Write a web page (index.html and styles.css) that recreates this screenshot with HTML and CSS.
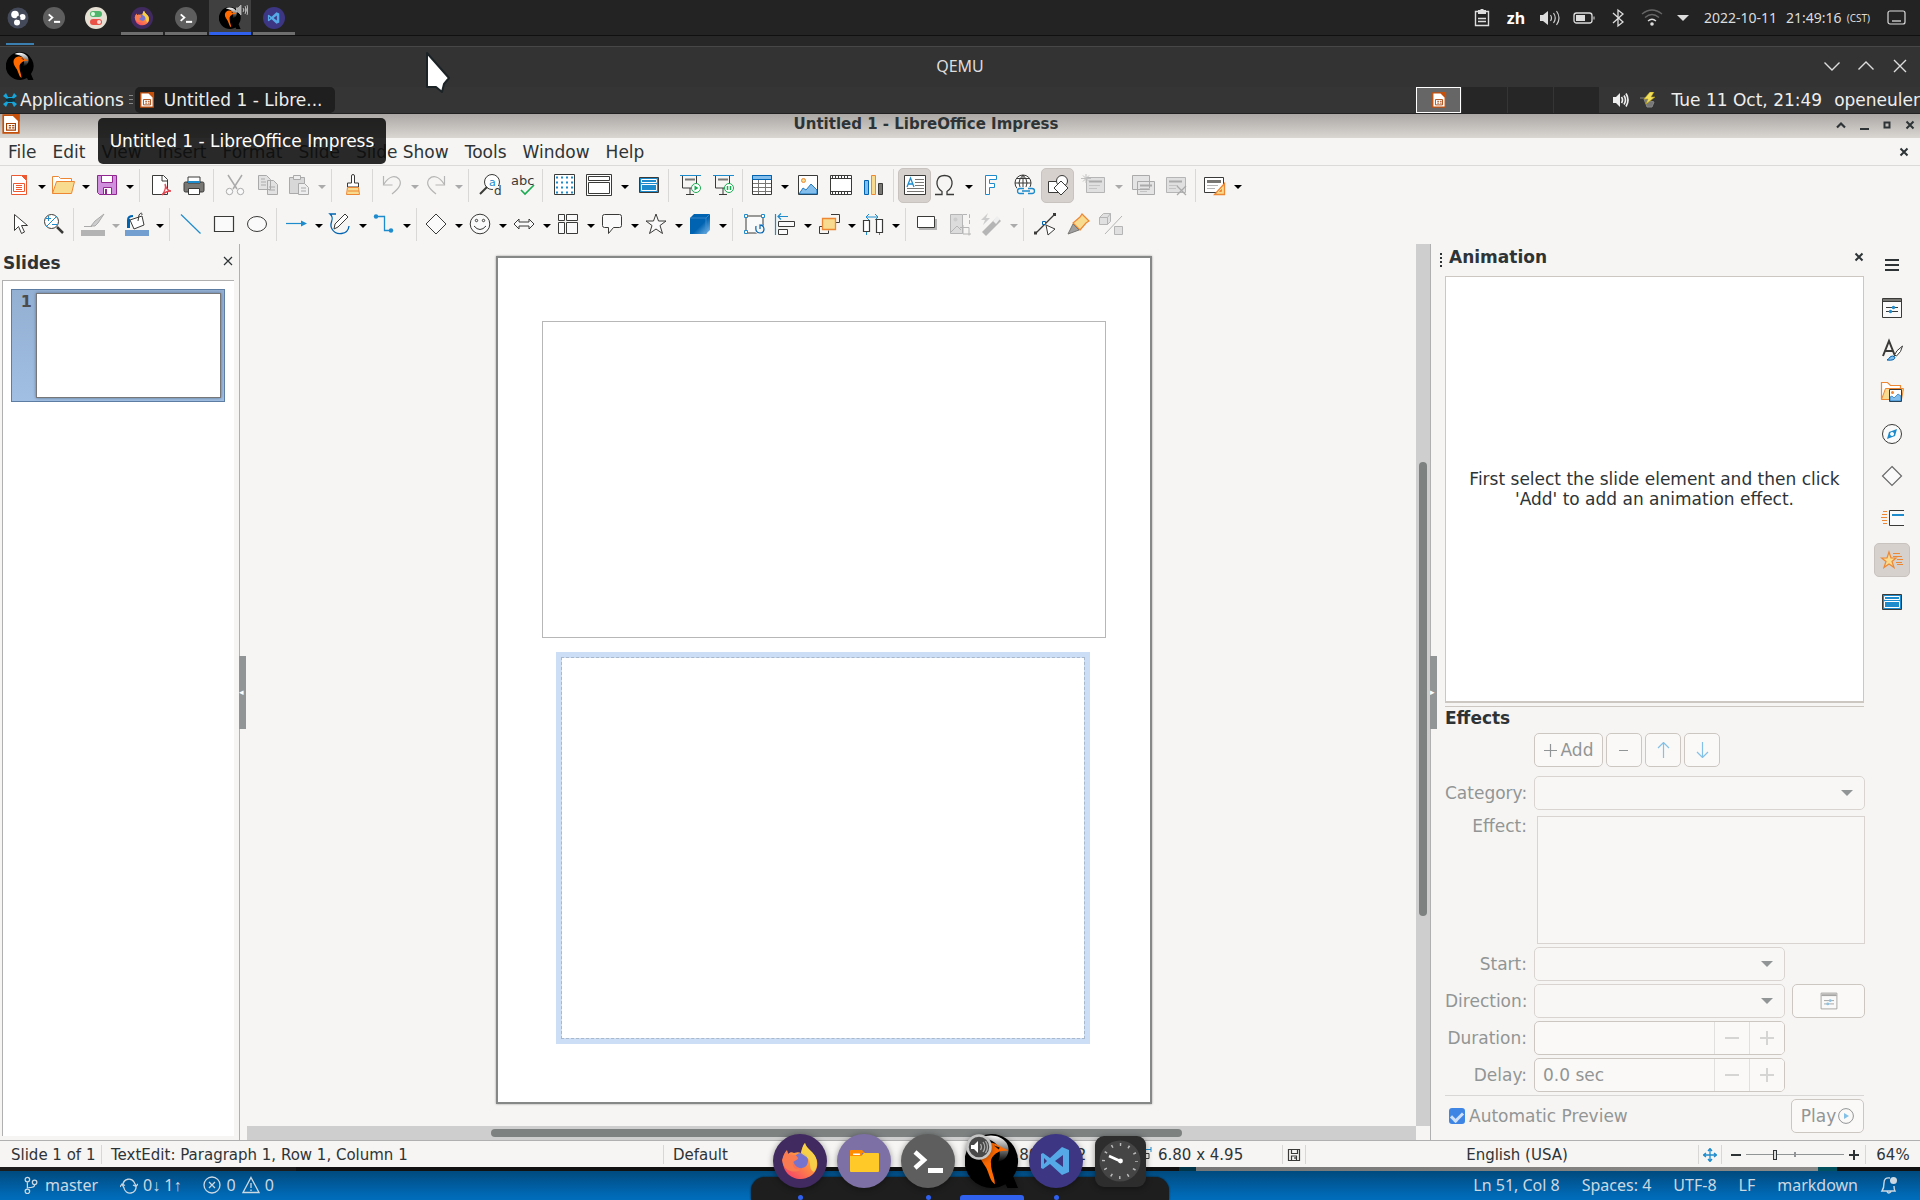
FILE: index.html
```html
<!DOCTYPE html>
<html lang="en">
<head>
<meta charset="utf-8">
<title>QEMU</title>
<link rel="stylesheet" href="styles.css">
</head>
<body>
<svg class="defs" aria-hidden="true">
  <defs>
    <linearGradient id="g-qemu" x1="0" y1="0" x2="0" y2="1"><stop offset="0" stop-color="#fff"/><stop offset="1" stop-color="#000"/></linearGradient>
    <linearGradient id="g-fox" x1="1" y1="0" x2="0.2" y2="1"><stop offset="0" stop-color="#ffe44a"/><stop offset=".45" stop-color="#ff9a3c"/><stop offset="1" stop-color="#f5436a"/></linearGradient>
    <linearGradient id="g-cube" x1="0" y1="0" x2="1" y2="1"><stop offset=".55" stop-color="#0063b1"/><stop offset="1" stop-color="#83beec"/></linearGradient>
  </defs>
  <symbol id="firefox" viewBox="0 0 54 54">
    <circle cx="27" cy="27" r="27" fill="#402a60"/>
    <path d="M10 25c0-4 2-7 4-9l1 4c2-2 4-2 6-1 3-1 5-1 7 0 1-4 2-8 4-10 1 5 7 8 10 13 6 10 0 22-14 23C17 45 9 37 10 25z" fill="url(#g-fox)"/>
    <path d="M20 26c1-5 7-9 12-6 4 3 4 10 0 13-5 3-11 0-12-7z" fill="#7673cf"/>
    <path d="M9 26c1-4 3-7 5-9l1 4c2-1 4 0 6 0 2 0 4 2 4 4l-5 3c-1 5 3 9 9 7-6 5-19 3-20-9z" fill="#f97b52"/>
    <path d="M28 19c1-5 2-8 4-10 1 5 7 8 10 13 3 6 2 12-1 16-5-2-3-7-5-12-2-4-5-4-8-7z" fill="#f7d64a" opacity=".85"/>
  </symbol>
  <symbol id="terminal" viewBox="0 0 54 54">
    <circle cx="27" cy="27" r="27" fill="#5e5e5e"/>
    <path d="M14 18l9 8-9 8" fill="none" stroke="#fff" stroke-width="4.5"/><path d="M27 34h15v5H27z" fill="#fff"/>
  </symbol>
  <symbol id="qemu" viewBox="0 0 56 56">
    <path d="M28 0a28 28 0 1 0 14 52l2 4h11l-5-12A28 28 0 0 0 28 0z" fill="#000"/>
    <path d="M17 4c9-5 21-2 26 5 5 8 1 18-9 20 4-7 2-16-3-20-4-3-9-4-14-5z" fill="url(#g-qemu)"/>
    <path d="M15 20c0-9 10-14 18-9 5 3 7 4 12 6l-9 1c-6 3-10 7-9 13 0 8 4 13 4 21-5-3-6-11-9-17-3-5-7-9-7-15z" fill="#ff6a00"/>
    <path d="M30 12l6 2-1 2z" fill="#111"/>
  </symbol>
  <symbol id="vscode" viewBox="0 0 54 54">
    <circle cx="27" cy="27" r="27" fill="#3c3683"/>
    <path fill-rule="evenodd" d="M33 13l7 3v22l-7 3-12-11-7 5-2-1V20l2-1 7 5zM34 21l-8 6 8 6zM15 24v6l3-3z" fill="#55a9e6"/>
  </symbol>
  <symbol id="impress" viewBox="0 0 16 18">
    <path d="M1 1h9l5 5v11H1z" fill="#fff" stroke="#c4500c" stroke-width="1.5"/><path d="M9 0h7v7z" fill="#c4500c"/>
    <path d="M4 8.500h8v6H4z" fill="none" stroke="#a33e03"/><path d="M6 10.500h2M9 10.500h2M6 12.500h2M9 12.500h2" stroke="#a33e03"/>
  </symbol>
  <symbol id="properties" viewBox="0 0 24 24">
    <path d="M2.500 2.500h19v19h-19z" fill="#fafafa" stroke="#3a3a38"/><path d="M3 3h18v2.500H3z" fill="#797774"/><path d="M3 5.500h18M6 11.500h12M6 15.500h12" stroke="#3a3a38"/><circle cx="13.500" cy="11.500" r="1.700" fill="#1e8bcd"/><circle cx="10.500" cy="15.500" r="1.700" fill="#1e8bcd"/>
  </symbol>
  <symbol id="master" viewBox="0 0 24 24">
    <path d="M2.500 4.500h19v15h-19z" fill="#1e8bcd" stroke="#3a3a38"/><path d="M4.500 6.500h15v3h-15zM4.500 11.500h15v6h-15z" fill="#1e8bcd" stroke="#fff"/>
  </symbol>
  <symbol id="cross" viewBox="0 0 10 10"><path d="M1.500 1.500l7 7M8.500 1.500l-7 7" stroke="#2e3436" stroke-width="2" fill="none"/></symbol>
</svg>

<header class="panel">
  <nav class="launchers" aria-label="Launchers">
    <button aria-label="Menu"><svg class="i22" viewBox="0 0 22 22"><circle cx="11" cy="11" r="10.500" fill="#454a5a"/><circle cx="8" cy="7.500" r="3.800" fill="#fff"/><circle cx="15.500" cy="10" r="3" fill="#fff"/><circle cx="10" cy="15.500" r="3" fill="#fff"/><circle cx="11.500" cy="11" r="2" fill="#454a5a"/></svg></button>
    <button aria-label="Terminal"><svg class="i22"><use href="#terminal"/></svg></button>
    <button class="wide" aria-label="Settings"><svg class="i22" viewBox="0 0 22 22"><circle cx="11" cy="11" r="11" fill="#e6e0d4"/><rect x="5" y="4" width="12" height="6" rx="3" fill="#4fb56c"/><rect x="5" y="12" width="12" height="6" rx="3" fill="#ea5248"/><circle cx="8" cy="7" r="2" fill="#dfffe4"/><circle cx="14" cy="15" r="2" fill="#ffdcd8"/></svg></button>
  </nav>
  <nav class="tasks" aria-label="Windows">
    <button aria-label="Firefox"><svg class="i22"><use href="#firefox"/></svg></button>
    <button aria-label="Terminal window"><svg class="i22"><use href="#terminal"/></svg></button>
    <button class="current" aria-label="QEMU"><svg class="i22"><use href="#qemu"/></svg><svg class="sound" viewBox="0 0 12 10"><path d="M0 3h2l3-3v10L2 7H0zM7 3q2 2 0 4M9 1q3 4 0 8M11 0q2.500 5 0 10" fill="#ddd" stroke="#bbb" fill-opacity=".7" stroke-width=".8"/></svg></button>
    <button aria-label="Code"><svg class="i22"><use href="#vscode"/></svg></button>
  </nav>
  <div class="tray">
    <span class="cell"><svg class="i22" viewBox="0 0 22 22"><path d="M4.500 4.500h13v14h-13zM7 11.500h8M7 14.500h8" fill="none" stroke="#ddd" stroke-width="1.400"/><path d="M7 3h2l1-1h2l1 1h2v4H7z" fill="#ddd"/></svg></span>
    <span class="cell lang">zh</span>
    <span class="cell"><svg class="i22" viewBox="0 0 22 22"><path d="M1 8h3l5-4v14l-5-4H1z" fill="#ddd"/><path d="M11.500 8q2 3 0 6M14.500 6q3.500 5 0 10M17.500 4q5 7 0 14" fill="none" stroke="#ccc" stroke-width="1.200"/></svg></span>
    <span class="cell"><svg class="i22" viewBox="0 0 22 22"><rect x="1" y="6" width="18" height="10" rx="2.500" fill="none" stroke="#ddd" stroke-width="1.300"/><path d="M3 8h9v6H3zM20.500 9.500h1v3h-1z" fill="#ddd"/></svg></span>
    <span class="cell"><svg class="i22" viewBox="0 0 22 22"><path d="M6 6l10 9-5 4V3l5 4-10 9" fill="none" stroke="#ddd" stroke-width="1.300"/></svg></span>
    <span class="cell"><svg class="i22" viewBox="0 0 22 22"><path d="M1 7q10-8 20 0M4 10.500q7-6 14 0" fill="none" stroke="#666" stroke-width="1.300"/><path d="M7 14q4-3.500 8 0" fill="none" stroke="#ddd" stroke-width="1.300"/><circle cx="11" cy="17" r="1.800" fill="#ddd"/></svg></span>
    <span class="cell narrow"><svg class="i12" viewBox="0 0 12 12"><path d="M0 3h12L6 9z" fill="#ddd"/></svg></span>
    <span class="date">2022-10-11</span><span class="time">21:49:16</span><span class="zone">(CST)</span>
    <span class="cell desk"><svg class="i22" viewBox="0 0 22 22"><rect x="2" y="4" width="17" height="13" rx="2" fill="none" stroke="#ddd" stroke-width="1.200"/><path d="M6 14h9" stroke="#ddd" stroke-width="1.300"/></svg></span>
  </div>
</header>

<div class="backdrop"><span></span></div>

<section class="vm-title">
  <svg class="i28"><use href="#qemu"/></svg>
  <h1>QEMU</h1>
  <div class="vm-buttons">
    <button aria-label="Minimize"><svg class="i16" viewBox="0 0 16 16"><path d="M0.500 4.500L8 12l7.500-7.500" fill="none" stroke="#ddd" stroke-width="1.400"/></svg></button>
    <button aria-label="Maximize"><svg class="i16" viewBox="0 0 16 16"><path d="M0.500 11.500L8 4l7.500 7.500" fill="none" stroke="#ddd" stroke-width="1.400"/></svg></button>
    <button aria-label="Close"><svg class="i16" viewBox="0 0 16 16"><path d="M2 2l12 12M14 2L2 14" fill="none" stroke="#ddd" stroke-width="1.400"/></svg></button>
  </div>
</section>

<div class="xfce">
  <button class="apps"><svg class="i16" viewBox="0 0 16 16"><path d="M1 4l3-3 2 4 4 0 2-4 3 3-4 3v2l4 3-3 3-2-4H6l-2 4-3-3 4-3V7z" fill="#17a6dc"/><path d="M4 7l3-1 3 0 3 1v2l-3 1H6L4 9z" fill="#073340"/></svg>Applications</button>
  <span class="grip"></span>
  <button class="task"><svg class="i16"><use href="#impress"/></svg>Untitled 1 - Libre...</button>
  <div class="pager"><span class="active"><svg class="i16"><use href="#impress"/></svg></span><span></span><span></span><span></span></div>
  <svg class="i16 snd" viewBox="0 0 16 16"><path d="M0 5h3l4-4v14l-4-4H0z" fill="#eee"/><path d="M8.500 5q2 3 0 6M11 3.500q3 4.500 0 9M13 1.500q4 6.500 0 13" fill="none" stroke="#eee" stroke-width="1.700"/></svg>
  <svg class="i16 pwr" viewBox="0 0 16 16"><path d="M0 6h8M4 7l3 8h5l2-5z" stroke="#888" fill="#777"/><path d="M10 0L4 7h4l-2 5 9-7h-4l3-5z" fill="#f2e05c" stroke="#b7a013" stroke-width=".6"/></svg>
  <span class="clock">Tue 11 Oct, 21:49</span>
  <span class="user">openeuler</span>
</div>

<div class="win-title">
  <svg class="doc"><use href="#impress"/></svg>
  <h2>Untitled 1 - LibreOffice Impress</h2>
  <div class="win-buttons">
    <button aria-label="Shade"><svg class="i10" viewBox="0 0 10 10"><path d="M1 7.500l4-4 4 4" fill="none" stroke="#2e3436" stroke-width="2.200"/></svg></button>
    <button aria-label="Minimize window"><svg class="i10" viewBox="0 0 10 10"><path d="M1 9h9" stroke="#2e3436" stroke-width="2"/></svg></button>
    <button aria-label="Maximize window"><svg class="i10" viewBox="0 0 10 10"><path d="M2.500 2.500h5v5h-5z" fill="none" stroke="#2e3436" stroke-width="2"/></svg></button>
    <button aria-label="Close window"><svg class="i10"><use href="#cross"/></svg></button>
  </div>
</div>

<nav class="menubar">
  <button>File</button><button>Edit</button><button>View</button><button>Insert</button><button>Format</button><button>Slide</button><button>Slide Show</button><button>Tools</button><button>Window</button><button>Help</button>
  <button class="doc-close" aria-label="Close document"><svg class="i10"><use href="#cross"/></svg></button>
</nav>

<div class="toolbar">
  <div class="combo"><button aria-label="New"><svg viewBox="0 0 24 24"><path d="M4.500 2.500h10l5 5v14h-15z" fill="#fff" stroke="#ed5a32"/><path d="M14 2h6v6z" fill="#ed5a32"/><path d="M6.500 10.500h11v8h-11z" fill="none" stroke="#ed5a32"/><path d="M9 12.500h6M9 14.500h6M9 16.500h6" stroke="#ed5a32"/></svg></button><button class="drop" aria-label="New options"></button></div>
  <div class="combo"><button aria-label="Open"><svg viewBox="0 0 24 24"><path d="M1.500 20.500v-17h6l2 2h11v3" fill="#fff" stroke="#ed8733"/><path d="M1.500 20.500l4-12h18l-3 12z" fill="#f8db8f" stroke="#ed8733"/></svg></button><button class="drop" aria-label="Open options"></button></div>
  <div class="combo"><button aria-label="Save"><svg viewBox="0 0 24 24"><path d="M2.500 2.500h19v19h-17l-2-2z" fill="#d190dd" stroke="#92278f"/><path d="M6.500 2.500h11v7h-11z" fill="#fff" stroke="#92278f"/><path d="M8.500 14.500h8v7h-8z" fill="#fff" stroke="#92278f"/><path d="M10 16h2v5h-2z" fill="#92278f"/></svg></button><button class="drop" aria-label="Save options"></button></div>
  <i class="sep"></i>
  <button aria-label="Export PDF"><svg viewBox="0 0 24 24"><path d="M3.500 2.500h11l4 4v15h-15z" fill="#fff" stroke="#3a3a38"/><path d="M13 2v6h6" fill="none" stroke="#3a3a38"/><path d="M13 22c4-5 4-8 3-11 1 4 3 7 6 7-3 0-6 1-9 4z" fill="#fff" stroke="#e14852" stroke-width="1.300"/></svg></button>
  <button aria-label="Print"><svg viewBox="0 0 24 24"><rect x="2" y="9" width="20" height="10" rx="1.500" fill="#797774" stroke="#3a3a38"/><path d="M6 4h12v6H6z" fill="#fff" stroke="#3a3a38"/><path d="M6 8h12v2H6z" fill="#1e8bcd"/><path d="M6.500 15.500h11v6h-11z" fill="#fff" stroke="#3a3a38"/></svg></button>
  <i class="sep"></i>
  <button disabled aria-label="Cut"><svg viewBox="0 0 24 24"><path d="M5 2l9 14M19 2l-9 14" fill="none" stroke="#aaa" stroke-width="1.500"/><circle cx="6.500" cy="18.500" r="3.200" fill="#fafafa" stroke="#aaa"/><circle cx="17.500" cy="18.500" r="3.200" fill="#fafafa" stroke="#aaa"/></svg></button>
  <button disabled aria-label="Copy"><svg viewBox="0 0 24 24"><path d="M2.500 2.500h8l4 4v10h-12zM11.500 7.500h6l4 4v10h-10z" fill="#e2e2e2" stroke="#aaa"/><path d="M5 6h4M5 9h5M5 12h5M13 14h6M13 17h6" stroke="#aaa"/></svg></button>
  <div class="combo"><button disabled aria-label="Paste"><svg viewBox="0 0 24 24"><path d="M2.500 4.500h15v16h-15z" fill="#d8d8d8" stroke="#aaa"/><path d="M6.500 2.500h7v4h-7zM11.500 10.500h6l4 4v7h-10z" fill="#eee" stroke="#aaa"/><path d="M14 15h5M14 18h5" stroke="#aaa"/></svg></button><button disabled class="drop" aria-label="Paste options"></button></div>
  <i class="sep"></i>
  <button aria-label="Clone formatting"><svg viewBox="0 0 24 24"><path d="M10.500 10V3a1.500 1.500 0 0 1 3 0v7h4v4h-11v-4z" fill="#fff" stroke="#3a3a38"/><path d="M6.500 14.500h11l1 7h-13z" fill="#f8db8f" stroke="#ed8733"/><path d="M7 18h11" stroke="#ed8733"/></svg></button>
  <i class="sep"></i>
  <div class="combo"><button disabled aria-label="Undo"><svg viewBox="0 0 24 24"><path d="M3.500 3v9h9M4 11c5-8 11-9 15-5 3 4 1 9-7 15" fill="none" stroke="#b5b5b5" stroke-width="1.200"/></svg></button><button disabled class="drop" aria-label="Undo list"></button></div>
  <div class="combo"><button disabled aria-label="Redo"><svg viewBox="0 0 24 24"><path d="M20.500 3v9h-9M20 11C15 3 9 2 5 6c-3 4-1 9 7 15" fill="none" stroke="#b5b5b5" stroke-width="1.200"/></svg></button><button disabled class="drop" aria-label="Redo list"></button></div>
  <i class="sep"></i>
  <button aria-label="Find and replace"><svg viewBox="0 0 24 24"><circle cx="14" cy="9" r="7.500" fill="#fff" stroke="#3a3a38"/><path d="M2 21l7-7" stroke="#3a3a38" stroke-width="2"/><path d="M15 13h9v10h-9z" fill="#f6f5f3"/><text x="11" y="13" font-size="11" fill="#1e8bcd">a</text><text x="16" y="22" font-size="12" fill="#3a3a38">d</text></svg></button>
  <button aria-label="Spelling"><svg viewBox="0 0 24 24"><text x="0" y="12" font-size="13" fill="#3a3a38">abc</text><path d="M10 17l4 4 9-9" fill="none" stroke="#18ab50" stroke-width="1.600"/></svg></button>
  <i class="sep"></i>
  <button aria-label="Display grid"><svg viewBox="0 0 24 24"><path d="M2.500 1.500h20v20h-20z" fill="#fff" stroke="#3a3a38"/><path d="M4 4.500h18M4 9.500h18M4 14.500h18M4 19.500h18" stroke="#1e8bcd" stroke-width="2" stroke-dasharray="2 3"/></svg></button>
  <div class="combo broad"><button aria-label="Display views"><svg class="w30" viewBox="0 0 28 24"><path d="M1.500 1.500h25v21h-25zM3.500 3.500h21v4h-21zM3.500 9.500h21v11h-21z" fill="#fff" stroke="#3a3a38"/></svg></button><button class="drop" aria-label="View options"></button></div>
  <button aria-label="Master slide"><svg><use href="#master"/></svg></button>
  <i class="sep"></i>
  <button aria-label="Start from first slide"><svg viewBox="0 0 24 24"><path d="M4.500 3v12h14V3M12 15v6M8 21.500h8" fill="none" stroke="#3a3a38"/><path d="M7 6.500h10" stroke="#797774" stroke-width="2"/><path d="M2 2.500h21" stroke="#1e8bcd"/><circle cx="18" cy="15" r="4.500" fill="#fff" stroke="#18ab50"/><path d="M16.500 12.500v5l4-2.500z" fill="#18ab50"/></svg></button>
  <button aria-label="Start from current slide"><svg viewBox="0 0 24 24"><path d="M4.500 3v12h14V3M12 15v6M8 21.500h8" fill="none" stroke="#3a3a38"/><path d="M7 6.500h10" stroke="#797774" stroke-width="2"/><path d="M2 2.500h21" stroke="#1e8bcd"/><circle cx="18" cy="15" r="4.500" fill="#fff" stroke="#18ab50"/><path d="M16.500 13v4M19.500 13v4" stroke="#18ab50" stroke-width="1.500"/></svg></button>
  <i class="sep"></i>
  <div class="combo"><button aria-label="Table"><svg viewBox="0 0 24 24"><path d="M2.500 2.500h19v19h-19z" fill="#fff" stroke="#3a3a38"/><path d="M2.500 2.500h19v4h-19z" fill="#83beec" stroke="#0063b1"/><path d="M3 10.500h18M3 14.500h18M3 18.500h18M8.500 7v14M15.500 7v14" stroke="#797774"/></svg></button><button class="drop" aria-label="Table options"></button></div>
  <button aria-label="Image"><svg viewBox="0 0 24 24"><path d="M2.500 2.500h19v19h-19z" fill="#fff" stroke="#3a3a38"/><circle cx="7.500" cy="7.500" r="2" fill="#f8db8f" stroke="#ed8733"/><path d="M3 21l4-6 3 2 5-6 6 6v4z" fill="#83beec" stroke="#0063b1" stroke-width=".8"/></svg></button>
  <button aria-label="Media"><svg viewBox="0 0 24 24"><path d="M1.500 2.500h21v19h-21z" fill="#fff" stroke="#3a3a38"/><path d="M2 5.500h20M2 18.500h20" stroke="#3a3a38"/><path d="M3 4h18M3 20h18" stroke="#3a3a38" stroke-width="2" stroke-dasharray="1 2"/></svg></button>
  <button aria-label="Chart"><svg viewBox="0 0 24 24"><path d="M2.500 7.500h4v14h-4z" fill="#83beec" stroke="#0063b1"/><path d="M9.500 2.500h4v19h-4z" fill="#f8db8f" stroke="#ed8733"/><path d="M16.500 10.500h4v11h-4z" fill="#797774" stroke="#3a3a38"/></svg></button>
  <i class="sep"></i>
  <button class="on" aria-label="Text box"><svg viewBox="0 0 24 24"><path d="M1.500 2.500h21v19h-21z" fill="#fff" stroke="#3a3a38"/><path d="M12 6.500h9M12 9.500h9M12 12.500h9M4 15.500h17M4 18.500h17" stroke="#797774"/><path d="M4 14l3.500-9L11 14M5 11h5" fill="none" stroke="#1e8bcd" stroke-width="1.300"/></svg></button>
  <div class="combo"><button aria-label="Special character"><svg viewBox="0 0 24 24"><path d="M1 21.500h7v-3C0 13 2 2.500 10.500 2.500S21 13 13 18.500v3h7" fill="none" stroke="#3a3a38" stroke-width="1.300"/></svg></button><button class="drop" aria-label="Character options"></button></div>
  <button aria-label="Fontwork"><svg viewBox="0 0 24 24"><path d="M5.500 2.500h11v4h-7v4h5v4h-5v7h-4z" fill="#fff" stroke="#1e8bcd"/></svg></button>
  <button aria-label="Hyperlink"><svg viewBox="0 0 24 24"><circle cx="10" cy="10" r="8" fill="#fff" stroke="#3a3a38"/><path d="M2 10h16M10 2v16M4 5.500h12M4 14.500h12M10 2q-8 8 0 16M10 2q8 8 0 16" fill="none" stroke="#3a3a38"/><path d="M4 14h19v8H4z" fill="#f6f5f3"/><path d="M11 15.500H7a2.500 2.500 0 0 0 0 5h4M15 15.500h4a2.500 2.500 0 0 1 0 5h-4M9 18h8" fill="none" stroke="#1e8bcd" stroke-width="1.300"/></svg></button>
  <button class="on" aria-label="Show draw functions"><svg viewBox="0 0 24 24"><path d="M2.500 8.500h11v11h-11z" fill="#fff" stroke="#3a3a38"/><circle cx="16" cy="8" r="5.500" fill="#fff" stroke="#3a3a38"/><path d="M15 8l7 7-7 7-7-7z" fill="#fff" stroke="#3a3a38"/></svg></button>
  <div class="combo broad"><button disabled aria-label="New slide"><svg viewBox="0 0 24 24"><path d="M5.500 4.500h18v15h-18z" fill="#e0e0e0" stroke="#b5b5b5"/><path d="M8 8.500h13" stroke="#aaa" stroke-width="2"/><path d="M8 12.500h11M8 15.500h8" stroke="#c4c4c4"/><path d="M5 1v9M0 5.500h10M2 2.500l6 6M8 2.500l-6 6" stroke="#c0c0c0"/></svg></button><button disabled class="drop" aria-label="New slide options"></button></div>
  <button disabled aria-label="Duplicate slide"><svg viewBox="0 0 24 24"><path d="M1.500 2.500h17v14h-17zM6.500 8.500h17v13h-17z" fill="#e4e4e4" stroke="#aaa"/><path d="M9 12.500h12" stroke="#aaa" stroke-width="2"/><path d="M9 15.500h10M9 18.500h7" stroke="#c4c4c4"/></svg></button>
  <button disabled aria-label="Delete slide"><svg viewBox="0 0 24 24"><path d="M2.500 4.500h19v15h-19z" fill="#e0e0e0" stroke="#b5b5b5"/><path d="M5 8.500h13" stroke="#aaa" stroke-width="2"/><path d="M5 12.500h9M5 15.500h7" stroke="#c4c4c4"/><path d="M13 13l9 9M22 13l-9 9" stroke="#aaa" stroke-width="1.300"/></svg></button>
  <i class="sep"></i>
  <div class="combo"><button aria-label="Slide layout"><svg viewBox="0 0 24 24"><path d="M1.500 4.500h19v15h-19z" fill="#fff" stroke="#3a3a38"/><path d="M4 8.500h14" stroke="#797774" stroke-width="3"/><path d="M4 12.500h11M4 15.500h8" stroke="#b5b5b5"/><path d="M21.500 10.500v11h-10z" fill="#f8db8f" stroke="#ed8733" stroke-width="1.300"/><path d="M18.500 16.500v2h-2z" fill="#fff" stroke="#ed8733"/></svg></button><button class="drop" aria-label="Layout options"></button></div>
</div>

<div class="toolbar">
  <button aria-label="Select"><svg viewBox="0 0 24 24"><path d="M5.500 2.500v16l4-4 3 7 3-1.500-3-6.500h6z" fill="#fff" stroke="#3a3a38"/></svg></button>
  <button aria-label="Zoom and pan"><svg viewBox="0 0 24 24"><circle cx="9.500" cy="9.500" r="7" fill="#fff" stroke="#3a3a38"/><path d="M15 15l6 6" stroke="#3a3a38" stroke-width="2.500"/><path d="M15 4L4 15M6.500 4v5M4 6.500h5M10 12.500h5" stroke="#1e8bcd"/></svg></button>
  <i class="sep"></i>
  <div class="combo"><button disabled aria-label="Line color"><svg viewBox="0 0 24 24"><path d="M0 18h24v6H0z" fill="#b3b3b3"/><path d="M3 14.500h8M23 2l-9 7-4 5h4l3-3z" fill="#ccc" stroke="#aaa"/></svg></button><button disabled class="drop" aria-label="Line color options"></button></div>
  <div class="combo"><button aria-label="Fill color"><svg viewBox="0 0 24 24"><path d="M0 18h24v6H0z" fill="#729fcf"/><path d="M3 16V8q0-4 5-4M4 16V7" fill="none" stroke="#0063b1" stroke-width="2"/><path d="M5 8l12-4 2 9-10 4z" fill="#fff" stroke="#3a3a38"/><path d="M13 9l1-6q3-4 3 0" fill="none" stroke="#3a3a38"/></svg></button><button class="drop" aria-label="Fill color options"></button></div>
  <i class="sep"></i>
  <button aria-label="Line"><svg viewBox="0 0 24 24"><path d="M2 2.500l19.500 19" stroke="#1e8bcd" stroke-width="1.200"/></svg></button>
  <button aria-label="Rectangle"><svg viewBox="0 0 24 24"><path d="M2.500 4.500h19v15h-19z" fill="#fafafa" stroke="#3a3a38" stroke-width="1.200"/></svg></button>
  <button aria-label="Ellipse"><svg viewBox="0 0 24 24"><ellipse cx="12" cy="12" rx="9.500" ry="7.500" fill="#fafafa" stroke="#3a3a38"/></svg></button>
  <i class="sep"></i>
  <div class="combo"><button aria-label="Arrow line"><svg viewBox="0 0 24 24"><path d="M2 11.500h16" stroke="#1e8bcd" stroke-width="1.200"/><path d="M17 8.500l6 3-6 3z" fill="#1e8bcd"/></svg></button><button class="drop" aria-label="Line types"></button></div>
  <div class="combo"><button aria-label="Curves"><svg viewBox="0 0 24 24"><path d="M8 2H2c6 5-2 9 2 15 4 7 16 6 17-3" fill="none" stroke="#0063b1" stroke-width="1.300"/><path d="M6 17l1-5 10-10 3 3L10 15z" fill="#fff" stroke="#3a3a38"/></svg></button><button class="drop" aria-label="Curve types"></button></div>
  <div class="combo"><button aria-label="Connector"><svg viewBox="0 0 24 24"><path d="M4 4.500h8.500v14H20" fill="none" stroke="#1e8bcd" stroke-width="1.300"/><circle cx="4" cy="4.500" r="2.200" fill="#1e8bcd"/><circle cx="19" cy="18.500" r="2.200" fill="#1e8bcd"/></svg></button><button class="drop" aria-label="Connector types"></button></div>
  <i class="sep"></i>
  <div class="combo"><button aria-label="Basic shapes"><svg viewBox="0 0 24 24"><path d="M12 2l10 10-10 10L2 12z" fill="#fafafa" stroke="#3a3a38"/></svg></button><button class="drop" aria-label="More basic shapes"></button></div>
  <div class="combo"><button aria-label="Symbols"><svg viewBox="0 0 24 24"><circle cx="12" cy="12" r="9.800" fill="#fafafa" stroke="#3a3a38"/><circle cx="8.500" cy="8.500" r="1.200" fill="none" stroke="#3a3a38"/><circle cx="15.500" cy="8.500" r="1.200" fill="none" stroke="#3a3a38"/><path d="M6 14q6 7 12 0" fill="none" stroke="#3a3a38"/></svg></button><button class="drop" aria-label="More symbols"></button></div>
  <div class="combo"><button aria-label="Block arrows"><svg viewBox="0 0 24 24"><path d="M2 12l5-5v3h10V7l5 5-5 5v-3H7v3z" fill="#fafafa" stroke="#3a3a38"/></svg></button><button class="drop" aria-label="More block arrows"></button></div>
  <div class="combo"><button aria-label="Flowchart"><svg viewBox="0 0 24 24"><path d="M2.500 2.500h6v6h-6zM10.500 2.500h11v6h-11zM2.500 10.500h6v11h-6zM10.500 10.500h11v11h-11z" fill="#fafafa" stroke="#3a3a38"/></svg></button><button class="drop" aria-label="More flowchart shapes"></button></div>
  <div class="combo"><button aria-label="Callouts"><svg viewBox="0 0 24 24"><path d="M4.500 2.500h15q2 0 2 2v9q0 2-2 2h-6l-5 6v-6h-4q-2 0-2-2v-9q0-2 2-2z" fill="#fafafa" stroke="#3a3a38"/></svg></button><button class="drop" aria-label="More callouts"></button></div>
  <div class="combo"><button aria-label="Stars"><svg viewBox="0 0 24 24"><path d="M12 2l2.500 7H22l-6 4.500 2.500 8L12 17l-6.500 4.500 2.500-8L2 9h7.500z" fill="#fafafa" stroke="#3a3a38"/></svg></button><button class="drop" aria-label="More stars"></button></div>
  <div class="combo"><button aria-label="3D objects"><svg viewBox="0 0 24 24"><path d="M6 2h16v16l-4 4H2V6z" fill="url(#g-cube)"/><path d="M2 6h16v16M18 6l4-4" stroke="#4a94d0" fill="none" stroke-width=".7"/></svg></button><button class="drop" aria-label="More 3D objects"></button></div>
  <i class="sep"></i>
  <button aria-label="Rotate"><svg viewBox="0 0 24 24"><path d="M4 4h17v17H4z" fill="#fafafa" stroke="#3a3a38"/><path d="M2.500 2.500h3v3h-3zM19.500 2.500h3v3h-3zM2.500 18.500h3v3h-3z" fill="#fff" stroke="#1e8bcd"/><circle cx="18" cy="17" r="5.500" fill="#f6f5f3"/><path d="M14 14q-1 7 4 7 4 0 4-4 0-3-4-4v4M18 13h4" fill="none" stroke="#0063b1" stroke-width="1.200"/></svg></button>
  <div class="combo"><button aria-label="Align"><svg viewBox="0 0 24 24"><path d="M2.500 2v21M5 4.500h10M8 1.500l-3 3 3 3" fill="none" stroke="#1e8bcd" stroke-width="1.200"/><path d="M5.500 9.500h16v5h-16zM5.500 17.500h9v5h-9z" fill="#fafafa" stroke="#3a3a38"/></svg></button><button class="drop" aria-label="Align options"></button></div>
  <div class="combo"><button aria-label="Arrange"><svg viewBox="0 0 24 24"><path d="M14 2.500h8.500v8H18M6 14.500H2.500v7h9v-3" fill="none" stroke="#3a3a38"/><path d="M5.500 6.500h13v11h-13z" fill="#f8db8f" stroke="#ed8733" stroke-width="1.300"/></svg></button><button class="drop" aria-label="Arrange options"></button></div>
  <div class="combo"><button aria-label="Distribute"><svg viewBox="0 0 24 24"><path d="M5 5h12M8 2L5 5l3 3M14 2l3 3-3 3M5.500 20v3M18.500 20v3" fill="none" stroke="#1e8bcd"/><path d="M2.500 8.500h6v11h-6zM15.500 7.500h6v13h-6z" fill="#fff" stroke="#3a3a38" stroke-width="1.200"/></svg></button><button class="drop" aria-label="Distribute options"></button></div>
  <i class="sep"></i>
  <button aria-label="Shadow"><svg viewBox="0 0 24 24"><path d="M4 7h18v11H4z" fill="#b5b5b5"/><path d="M2.500 4.500h17v11h-17z" fill="#fff" stroke="#3a3a38"/></svg></button>
  <button disabled aria-label="Crop"><svg viewBox="0 0 24 24"><path d="M2.500 2.500h12v19h-12z" fill="#dcdcdc" stroke="#b5b5b5"/><path d="M15 2.500h6.500V14" fill="none" stroke="#b5b5b5" stroke-dasharray="4 2"/><circle cx="7.500" cy="7.500" r="2" fill="#ccc"/><path d="M3 20l6-6 4 4M15 13v9h8M12 15.500h9v8" fill="none" stroke="#b5b5b5"/></svg></button>
  <div class="combo"><button disabled aria-label="Filter"><svg viewBox="0 0 24 24"><path d="M3 20L18 5l4 4L7 24z" fill="#b5b5b5"/><path d="M9 1L2 8h4l-2 5 7-7H7z" fill="#ccc"/><path d="M14 9l4-5 3 3-4 5z" fill="#eee"/></svg></button><button disabled class="drop" aria-label="Filter options"></button></div>
  <i class="sep"></i>
  <button aria-label="Edit points"><svg viewBox="0 0 24 24"><path d="M3 21L21 3" stroke="#3a3a38" stroke-width="1.200"/><path d="M1 19.500h3v3H1zM20 1h3v3h-3z" fill="#3a3a38"/><path d="M9.500 9.500h3v3h-3z" fill="#fff" stroke="#0063b1"/><path d="M13 13l2 10 7-6z" fill="#fff" stroke="#3a3a38"/></svg></button>
  <button aria-label="Glue points"><svg viewBox="0 0 24 24"><path d="M16 2l7 7-3 2-6 7-7-7 7-6z" fill="#f8db8f" stroke="#ed8733" stroke-width="1.200"/><path d="M7 12l6 6-11 4z" fill="#a0a0a0" stroke="#797774"/></svg></button>
  <button disabled aria-label="Toggle extrusion"><svg viewBox="0 0 24 24"><path d="M0.500 5.500l4-4h7v8l-3 3h-8z" fill="#e0e0e0" stroke="#b5b5b5"/><path d="M0.500 5.500h8v7M8.500 5.500l3-4M23 4L6 22" fill="none" stroke="#b5b5b5"/><path d="M15.500 14.500h8v8h-8z" fill="#e0e0e0" stroke="#b5b5b5"/></svg></button>
</div>

<main class="work">
  <aside class="slides">
    <header><h3>Slides</h3><button aria-label="Close slides panel"><svg class="i10" viewBox="0 0 10 10"><path d="M1 1l8 8M9 1l-8 8" stroke="#2e3436" stroke-width="1.200"/></svg></button></header>
    <ol><li><span>1</span><div></div></li></ol>
  </aside>
  <div class="splitter"><span>◂</span></div>
  <section class="stage">
    <div class="canvas">
      <article class="page"><div class="ph-title"></div><div class="ph-body" role="textbox" aria-label="Content"></div></article>
    </div>
    <div class="vscroll"><span></span></div>
    <div class="hscroll"><span></span></div>
  </section>
  <div class="splitter"><span>▸</span></div>
  <aside class="sidebar">
    <header><i></i><h3>Animation</h3><button aria-label="Close sidebar"><svg class="i10"><use href="#cross"/></svg></button></header>
    <div class="anim-list"><p>First select the slide element and then click<br>'Add' to add an animation effect.</p></div>
    <hr class="warm">
    <h3 class="effects-title">Effects</h3>
    <form class="effects">
      <div class="row buttons">
        <button type="button" disabled class="add"><svg class="i14" viewBox="0 0 14 14"><path d="M0 7.500h13M6.500 1v13" stroke="#929595" stroke-width="1.200"/></svg>Add</button>
        <button type="button" disabled aria-label="Remove"><svg class="i16" viewBox="0 0 16 16"><path d="M3 8.500h9" stroke="#929595"/></svg></button>
        <button type="button" disabled aria-label="Move up"><svg class="i16" viewBox="0 0 16 16"><path d="M8.500 16V1M3 6l5.500-5.500L14 6" fill="none" stroke="#84c1e6" stroke-width="1.200"/></svg></button>
        <button type="button" disabled aria-label="Move down"><svg class="i16" viewBox="0 0 16 16"><path d="M8.500 0v15M3 10l5.500 5.500L14 10" fill="none" stroke="#84c1e6" stroke-width="1.200"/></svg></button>
      </div>
      <label for="category" class="cat">Category:</label>
      <div class="pick full category"><select id="category" disabled><option></option></select></div>
      <label for="effect" class="top">Effect:</label>
      <select id="effect" class="listbox full" size="5" disabled></select>
      <label for="start">Start:</label>
      <div class="pick"><select id="start" disabled><option></option></select></div>
      <label for="direction">Direction:</label>
      <div class="pick"><select id="direction" disabled><option></option></select></div>
      <button type="button" disabled class="opts" aria-label="Options"><svg class="i20"><use href="#properties"/></svg></button>
      <label for="duration">Duration:</label>
      <div class="spin"><input id="duration" disabled><button type="button" disabled aria-label="Decrease duration"><i class="minus"></i></button><button type="button" disabled aria-label="Increase duration"><i class="plus"></i></button></div>
      <label for="delay">Delay:</label>
      <div class="spin"><input id="delay" value="0.0 sec" disabled><button type="button" disabled aria-label="Decrease delay"><i class="minus"></i></button><button type="button" disabled aria-label="Increase delay"><i class="plus"></i></button></div>
    </form>
    <hr>
    <footer><input type="checkbox" id="auto" checked disabled><label for="auto">Automatic Preview</label><button disabled>Play<svg class="i16" viewBox="0 0 16 16"><circle cx="8" cy="8" r="7.400" fill="none" stroke="#929595"/><path d="M6 5v6l5-3z" fill="#84c1e6"/></svg></button></footer>
  </aside>
  <nav class="tabs" aria-label="Sidebar tabs">
    <button aria-label="Sidebar settings"><svg viewBox="0 0 24 24"><path d="M5 7h14M5 12h14M5 17h14" stroke="#2e3436" stroke-width="2"/></svg></button>
    <button aria-label="Properties"><svg><use href="#properties"/></svg></button>
    <button aria-label="Styles"><svg viewBox="0 0 24 24"><path d="M3 18L9 3l6 15M5 13h8" fill="none" stroke="#3a3a38" stroke-width="2"/><path d="M22.500 8q-7 5-8 9l2 1q5-4 6-10z" fill="#fff" stroke="#3a3a38"/><path d="M7 22q2-1 3-3 2-2 5 0 0 4-8 3z" fill="#83beec" stroke="#0063b1"/></svg></button>
    <button aria-label="Gallery"><svg viewBox="0 0 24 24"><path d="M1.500 19.500v-17h6l3 3h10v3" fill="#fff" stroke="#ed8733" stroke-width="1.200"/><path d="M1.500 19.500l4-11h18l-2 11z" fill="#f8db8f" stroke="#ed8733"/><path d="M9.500 9.500h12v12h-12z" fill="#fff" stroke="#3a3a38"/><path d="M10 21v-4l2-1 2 2 4-4 3 2v5z" fill="#83beec" stroke="#0063b1" stroke-width=".6"/><circle cx="12.500" cy="12.500" r="1.500" fill="#ed8733"/></svg></button>
    <button aria-label="Navigator"><svg viewBox="0 0 24 24"><circle cx="12" cy="12" r="9.500" fill="#fafafa" stroke="#3a3a38"/><path fill-rule="evenodd" d="M17 7l-2 7-8 3 2-7zM12 10a2 2 0 1 0 .1 0z" fill="#1e8bcd"/></svg></button>
    <button aria-label="Shapes"><svg viewBox="0 0 24 24"><path d="M12 2.500l9.500 9.500-9.500 9.500L2.500 12z" fill="#fafafa" stroke="#696969" stroke-width="1.200"/></svg></button>
    <button aria-label="Slide transition"><svg viewBox="0 0 24 24"><path d="M24 4.500H9.500v15H24" fill="#fafafa" stroke="#3a3a38"/><path d="M12 9h12" stroke="#1e8bcd" stroke-width="2"/><path d="M3 5.500h4M2 8.500h5M1 11.500h6M2 14.500h5M3 17.500h4" stroke="#ed8733"/></svg></button>
    <button class="on" aria-label="Animation"><svg viewBox="0 0 24 24"><path d="M9 4l2 6h5l-4 3.500 2 6-5-3.500-5 3.500 2-6L1.500 10H7z" fill="#f8db8f" stroke="#ed8733" stroke-width="1.200"/><path d="M13 5.500h7M13 8.500h9M17 11.500h6M16 14.500h6M17 16.500h6" stroke="#ed8733"/></svg></button>
    <button aria-label="Master slides"><svg><use href="#master"/></svg></button>
  </nav>
</main>

<footer class="status">
  <span class="s-slide">Slide 1 of 1</span><span class="s-edit">TextEdit: Paragraph 1, Row 1, Column 1</span><span class="s-layout">Default</span>
  <span class="s-pos">1.80 / 6.82</span>
  <span class="s-size"><svg class="i16" viewBox="0 0 16 16"><path d="M2 2.500h13M15 0v5" stroke="#1e8bcd"/><path d="M3 6.500h10v5H3" fill="none" stroke="#3a3a38"/></svg>6.80 x 4.95</span>
  <span class="s-save"><svg class="i14" viewBox="0 0 14 14"><path d="M1.500 1.500h11v11h-11zM4.500 1.500v4h6v-4M4.500 12v-4h5v4M8 9v2" fill="none" stroke="#3a3a38" stroke-width="1.200"/></svg></span>
  <span class="s-lang">English (USA)</span>
  <span class="s-fit"><svg class="i14" viewBox="0 0 14 14"><path d="M7 1v12M1 7h12M5 3l2-2.500L9 3M5 11l2 2.500L9 11M3 5L.5 7 3 9M11 5l2.500 2L11 9" fill="none" stroke="#1e8bcd" stroke-width="1.300"/></svg></span>
  <span class="s-zoom"><b class="zminus"></b><input type="range" min="0" max="100" value="29" aria-label="Zoom"><b class="zplus"></b></span>
  <span class="s-percent">64%</span>
</footer>

<div class="edge"></div>

<footer class="code-status">
  <span class="branch"><svg class="i18" viewBox="0 0 18 20"><g fill="none" stroke="#ccd8e2" stroke-width="1.400"><circle cx="5" cy="4" r="2.500"/><circle cx="5" cy="17" r="2.500"/><circle cx="13" cy="7" r="2.500"/><path d="M5 7v7M13 10q0 3-7 3"/></g></svg>master</span>
  <span class="sync"><svg class="i18" viewBox="0 0 18 18"><path d="M3 8a6 6 0 0 1 11-2l2 4M16 10a6 6 0 0 1-12 2L2 8M13 9l3 1.500L18 8M0 11l2-3 3 1.500" fill="none" stroke="#ccd8e2" stroke-width="1.300"/></svg>0↓ 1↑</span>
  <span class="errors"><svg class="i18" viewBox="0 0 18 18"><circle cx="9" cy="9" r="8" fill="none" stroke="#ccd8e2" stroke-width="1.300"/><path d="M6 6l6 6M12 6l-6 6" stroke="#ccd8e2" stroke-width="1.300"/></svg>0</span>
  <span class="warns"><svg class="i18" viewBox="0 0 18 18"><path d="M9 1.500l8 15H1zM9 7v5M9 13.500v1.500" fill="none" stroke="#ccd8e2" stroke-width="1.300"/></svg>0</span>
  <span class="right">Ln 51, Col 8</span><span>Spaces: 4</span><span>UTF-8</span><span>LF</span><span>markdown</span>
  <svg class="i18" viewBox="0 0 18 18"><path d="M10 2q-6-1-6 5 0 5-2 8h13q-1-2-1-5M7 15.500q1.500 3 4 0" fill="none" stroke="#ccd8e2" stroke-width="1.400"/><circle cx="13.500" cy="4.500" r="3.500" fill="#ccd8e2"/></svg>
</footer>

<nav class="dock" aria-label="Dock">
  <button class="run" aria-label="Firefox dock"><svg><use href="#firefox"/></svg></button>
  <button aria-label="Files"><svg viewBox="0 0 54 54"><circle cx="27" cy="27" r="27" fill="#7d70a5"/><path d="M13 17q0-1 1-1h11l3 3h-3l-1 4H13z" fill="#ff8c00"/><path d="M13 22h11l3-3h14q1 0 1 1v17q0 1-1 1H14q-1 0-1-1z" fill="#ffca28"/><path d="M16 19.500h7v1.500h-7z" fill="#fff"/></svg></button>
  <button class="run" aria-label="Terminal dock"><svg><use href="#terminal"/></svg></button>
  <button class="focus" aria-label="QEMU dock"><svg><use href="#qemu"/></svg><svg class="badge" viewBox="0 0 26 26"><circle cx="13" cy="13" r="11.500" fill="#484848" stroke="#c4c4c4" stroke-width="2.500"/><path d="M5 11h3l4-4v12l-4-4H5z" fill="#fff"/><path d="M14.500 10q2 3 0 6M17 8q3.500 5 0 10M19.500 7q4 6 0 12" fill="none" stroke="#aaa" stroke-width="1.300"/></svg></button>
  <button class="run" aria-label="Code dock"><svg><use href="#vscode"/></svg></button>
  <button aria-label="Clock"><svg viewBox="0 0 54 54"><rect x="2" y="2" width="51" height="51" rx="9" fill="#2d2d2d"/><circle cx="27" cy="27" r="20.500" fill="#454545"/><circle cx="27" cy="27" r="16.500" fill="none" stroke="#bbb" stroke-width="3" stroke-dasharray="1.500 7.140" stroke-dashoffset=".7"/><path d="M16 22l11 5" stroke="#fff" stroke-width="2.600"/><circle cx="27.500" cy="27" r="2.400" fill="#fff"/></svg></button>
</nav>

<div class="tooltip" role="tooltip">Untitled 1 - LibreOffice Impress</div>
<svg class="pointer" viewBox="0 0 26 42"><path d="M3 2v34h9l6 5 2-8 5-6z" fill="#fff" stroke="#1c2326" stroke-width="2" stroke-linejoin="round"/></svg>
</body>
</html>
```
FILE: styles.css
```css
* { box-sizing: border-box; }
body {
  margin: 0; height: 100vh; display: flex; flex-direction: column; position: relative; overflow: hidden;
  font: 17px/20px "DejaVu Sans", sans-serif; color: #2e3436; background: #f6f5f3;
}
h1, h2, h3, p, ol { margin: 0; padding: 0; font-size: 17px; }
button, input, select { font: inherit; color: inherit; margin: 0; padding: 0; border: 0; background: none; }
button { display: flex; align-items: center; justify-content: center; }
svg { flex: none; display: block; }
.defs { position: absolute; width: 0; height: 0; }
.i10 { width: 10px; height: 10px; }
.i12 { width: 12px; height: 12px; }
.i14 { width: 14px; height: 14px; }
.i16 { width: 16px; height: 16px; }
.i18 { width: 18px; height: 18px; }
.i20 { width: 20px; height: 20px; }
.i22 { width: 22px; height: 22px; }
.i28 { width: 28px; height: 28px; }

/* host panel */
.panel { display: flex; height: 36px; flex: none; background: #232323; border-bottom: 1px solid #101010; color: #ddd; font-family: "Noto Sans", sans-serif; font-size: 14px; }
.launchers, .tasks, .tray { display: flex; }
.launchers button { width: 36px; }
.launchers .wide { width: 48px; }
.tasks { gap: 2px; padding-left: 1px; }
.tasks button { width: 42px; border-bottom: 3px solid #6e6e6e; padding-top: 3px; position: relative; }
.tasks .current { background: #404040; border-color: #3060ee; }
.sound { position: absolute; right: 3px; top: 5px; width: 12px; height: 10px; }
.tray { margin-left: auto; align-items: center; padding-top: 1px; }
.cell { width: 34px; display: flex; justify-content: center; }
.cell.narrow { width: 28px; margin-right: 7px; }
.cell.desk { width: 34px; margin: 0 6px 0 10px; }
.lang { font-weight: bold; color: #fff; font-size: 16px; }
.time { margin-left: 9px; }
.zone { margin-left: 5px; font-size: 10px; }
.backdrop { height: 10px; flex: none; background: #272727; display: flex; align-items: flex-end; }
.backdrop span { width: 28px; height: 2px; margin: 0 0 1px 6px; background: #3a7fb0; }

/* virtual machine window */
.vm-title { flex: none; height: 41px; display: flex; align-items: center; justify-content: space-between; background: #333; border-top: 1px solid #474747; padding: 0 3px 2px 6px; color: #ddd; }
.vm-title > svg { margin-right: 71px; }
.vm-title h1 { font: 16px "Noto Sans", sans-serif; }
.vm-buttons { display: flex; }
.vm-buttons button { width: 34px; }
.xfce { flex: none; height: 27px; display: flex; align-items: center; background: #353535; border-bottom: 1px solid #222; color: #eee; }
.apps { gap: 2px; padding-left: 2px; }
.grip { width: 4px; height: 10px; margin: 0 2px 0 5px; background: repeating-linear-gradient(#888 0 1px, transparent 1px 4px); }
.task { width: 200px; height: 26px; background: #1f1f1f; border-radius: 5px; justify-content: flex-start; gap: 9px; padding-left: 4px; }
.pager { margin-left: auto; display: flex; height: 26px; gap: 1px; }
.pager span { width: 45px; background: #262626; display: flex; align-items: center; justify-content: center; }
.pager .active { background: #666; border: 1px solid #fff; }
.snd { margin: 0 11px 0 14px; }
.clock { margin: 0 12px 0 15px; }
.win-title { flex: none; height: 24px; display: flex; justify-content: space-between; background: linear-gradient(#aba8a5, #dad6d2); padding: 0 5px 0 2px; }
.win-title h2 { font-size: 15px; line-height: 21px; padding-right: 74px; }
.doc { width: 18px; height: 20px; margin-right: 70px; }
.win-buttons { display: flex; gap: 13px; height: 22px; }
.menubar { flex: none; height: 28px; display: flex; border-bottom: 1px solid #dcdad8; padding-top: 1px; }
.menubar button { padding: 0 8px; }
.menubar .doc-close { margin-left: auto; padding: 0 11px; }

/* toolbars */
.toolbar { flex: none; display: flex; align-items: center; height: 39px; padding: 0 0 1px 4px; }
.toolbar button { width: 33px; height: 35px; border: 1px solid transparent; border-radius: 5px; }
.toolbar svg { width: 24px; height: 24px; }
.toolbar svg.w30 { width: 28px; }
.toolbar .on, .tabs .on { background: #d6d1cd; border: 1px solid #c9c3bf; }
.combo { display: flex; width: 44px; }
.combo button { width: 30px; }
.combo .drop { width: 14px; }
.combo.broad { width: 52px; }
.combo.broad button { width: 37px; }
.combo.broad .drop { width: 15px; }
.drop::before { content: ""; border: 4px solid transparent; border-top-color: #000; border-bottom: 0; margin: 4px 0 0 1px; }
.drop:disabled::before { border-top-color: #aaa; }
.sep { width: 1px; height: 33px; margin: 0 4px 0 3px; background: #dad8d6; }

/* workspace */
.work { flex: 1; min-height: 0; display: flex; border-bottom: 1px solid #b0b0b0; }
.slides { width: 239px; padding: 0 5px 4px 2px; display: flex; flex-direction: column; }
.slides header { height: 36px; display: flex; justify-content: space-between; align-items: center; padding: 2px 1px 0; }
.slides header button { margin-top: -4px; }
.slides ol { flex: 1; list-style: none; background: #fff; border: 1px solid #b0b0b0; border-width: 1px 0 0 1px; padding: 8px 9px 0 8px; }
.slides li { height: 113px; border: 1px solid #5d7da3; background: linear-gradient(#93afd2, #a0bfe3); display: flex; padding: 3px; font-weight: bold; font-size: 16px; color: #4c4c4c; }
.slides li span { width: 21px; text-align: right; padding-right: 4px; line-height: 18px; }
.slides li div { flex: 1; background: #fff; border: 1px solid #777; box-shadow: 0 0 3px #5d7390; }
.splitter { width: 8px; flex: none; border-left: 1px solid #b0b0b0; display: flex; align-items: center; }
.splitter span { width: 7px; height: 73px; margin-left: -1px; background: #929595; color: #fff; font-size: 9px; line-height: 73px; overflow: hidden; }
.stage { flex: 1; display: grid; grid-template: 1fr 14px / 1fr 14px; }
.canvas { display: flex; padding: 12px 264px 22px 249px; }
.page { flex: 1; display: flex; flex-direction: column; gap: 14px; background: #fff; border: 2px solid #868787; box-shadow: 0 0 2px #999; padding: 63px 44px 58px; }
.ph-title { flex: 316; border: 1px solid #b7b7b7; }
.ph-body { flex: 381; margin: 0 16px 0 14px; border: 6px solid #cbdef5; outline: 1px dashed #a9b9cb; outline-offset: -6px; }
.vscroll { background: #cecece; padding: 218px 3px 0; }
.vscroll span { display: block; height: 454px; width: 8px; border-radius: 4px; background: #7d8180; }
.hscroll { background: #cecece; padding: 3px 0 0 244px; }
.hscroll span { display: block; width: 691px; height: 8px; border-radius: 4px; background: #7d8180; }

/* sidebar */
.sidebar { width: 435px; padding: 0 9px 0 7px; display: flex; flex-direction: column; }
.sidebar header { height: 32px; display: flex; align-items: center; margin-left: -5px; padding-top: 0; }
.sidebar header i { width: 2px; height: 14px; margin-right: 7px; background: repeating-linear-gradient(#2e3436 0 2px, transparent 2px 4px); }
.sidebar header h3 { flex: 1; line-height: 27px; align-self: flex-start; }
.sidebar header button { margin: -6px 0 0; }
.anim-list { flex: 1; border: 1px solid #cdc7c2; border-bottom-width: 2px; background: #fff; display: flex; align-items: center; justify-content: center; text-align: center; white-space: nowrap; }
hr { margin: 0; width: 100%; border: 0; height: 1px; flex: none; background: #d9d7d5; }
hr.warm { margin-top: 3px; background: #cdc7c2; }
.effects-title { padding: 1px 0 5px; }
.sidebar button, .pick select, .spin { height: 34px; border: 1px solid #cdc7c2; border-radius: 5px; background: #faf9f8; }
.sidebar header button { height: 10px; border: 0; background: none; }
.effects, .sidebar footer { color: #929595; }
.effects { display: grid; grid-template-columns: 82px 251px 73px; column-gap: 7px; row-gap: 3px; align-items: center; }
.row { grid-column: 2 / 4; display: flex; gap: 3px; margin-bottom: 6px; }
.row button { width: 36px; }
.row .add { width: 69px; gap: 3px; }
.effects label { grid-column: 1; text-align: right; }
.effects .cat { padding-bottom: 3px; }
.effects .top { align-self: start; }
.full { grid-column: 2 / 4; }
.pick { position: relative; }
.pick select { width: 100%; appearance: none; display: block; }
.pick::after { content: ""; position: absolute; right: 12px; top: 14px; border: 6px solid transparent; border-top-color: #929595; border-bottom: 0; }
.category { margin-bottom: 3px; }
.listbox { height: 128px; margin-left: 3px; border: 1px solid #cdc7c2; border-radius: 0; background: #faf9f8; appearance: none; overflow: hidden; }
.opts svg { opacity: .5; }
.spin { display: flex; overflow: hidden; }
.spin input { flex: 1; min-width: 0; padding-left: 8px; }
.spin button { width: 35px; height: 32px; border: 0; border-left: 1px solid #e2e0de; border-radius: 0; }
.minus, .plus { width: 14px; height: 2px; background: #d5d5d3; position: relative; }
.plus::after { content: ""; position: absolute; left: 6px; top: -6px; width: 2px; height: 14px; background: #d5d5d3; }
.effects + hr { margin-top: 3px; }
.sidebar footer { display: flex; align-items: center; padding: 3px 0 7px 4px; }
.sidebar footer input { appearance: none; width: 16px; height: 16px; border-radius: 3px; background: #3f86e4; display: flex; justify-content: center; margin-right: 4px; }
.sidebar footer input::after { content: ""; width: 5px; height: 9px; margin-top: 2px; border: solid #cfe1fa; border-width: 0 3px 3px 0; transform: rotate(45deg); }
.sidebar footer button { margin-left: auto; width: 73px; gap: 2px; }
.tabs { width: 47px; padding: 2px 10px 0 1px; display: flex; flex-direction: column; gap: 8px; }
.tabs button { width: 36px; height: 34px; border: 1px solid transparent; border-radius: 5px; }
.tabs button:first-child { height: 37px; }
.tabs svg { width: 24px; height: 24px; }

/* status bars */
.status { flex: none; display: flex; height: 26px; align-items: center; font-size: 15px; white-space: nowrap; padding-top: 1px; }
.status span { display: flex; align-items: center; height: 19px; }
.s-slide { width: 102px; padding-left: 11px; border-right: 1px solid #d9d7d5; }
.s-edit { width: 562px; padding-left: 9px; border-right: 1px solid #d9d7d5; }
.s-layout { width: 341px; padding-left: 9px; }
.s-pos { width: 131px; }
.s-size { width: 147px; gap: 6px; border-right: 1px solid #d9d7d5; }
.s-save { width: 23px; justify-content: center; border-right: 1px solid #d9d7d5; }
.s-lang { flex: 1; justify-content: center; }
.status .s-lang { margin-left: 30px; }
.s-fit { width: 24px; justify-content: center; border: 1px solid #d9d7d5; border-width: 0 1px; }
.s-zoom { width: 144px; border-right: 1px solid #d9d7d5; padding: 0 6px 0 9px; gap: 5px; }
.zminus, .zplus { width: 10px; height: 2px; background: #2e3436; position: relative; flex: none; }
.zplus::after { content: ""; position: absolute; left: 4px; top: -4px; width: 2px; height: 10px; background: #2e3436; }
.s-zoom input { flex: 1; min-width: 0; height: 12px; appearance: none; background: linear-gradient(#929595, #929595) 50% 50% / 100% 1px no-repeat, linear-gradient(#929595, #929595) 50% 50% / 2px 5px no-repeat; }
.s-zoom input::-webkit-slider-thumb { appearance: none; width: 4px; height: 10px; border: 1px solid #2e3436; background: #ddd; }
.s-percent { width: 54px; justify-content: center; }
.edge { flex: none; height: 4px; background: linear-gradient(90deg, #1c1c1c 296px, #111 296px, #111 1179px, #023448 1179px, #023448 1196px, #777 1196px, #8b8987 1818px, #02505e 1818px, #02505e 1837px, #111 1837px); }
.code-status { flex: none; height: 29px; display: flex; align-items: center; padding: 0 22px 2px; background: linear-gradient(#004a7e, #0068b3 80%, #006dbb); color: #ccd8e2; font-family: "Noto Sans", sans-serif; font-size: 16px; white-space: nowrap; gap: 22px; }
.code-status span { display: flex; align-items: center; gap: 5px; }
.code-status .warns { margin-left: -16px; }
.code-status .right { margin-left: auto; }

/* overlays */
.dock { position: absolute; bottom: 0; left: 50%; margin-left: -209px; width: 418px; height: 23px; background: #1e1e1e; border-radius: 14px 14px 0 0; display: flex; align-items: flex-end; padding: 0 17px; box-shadow: 0 0 2px #111; }
.dock button { width: 64px; height: 66px; flex: none; position: relative; align-items: flex-start; }
.dock svg { width: 54px; height: 54px; filter: drop-shadow(0 1px 3px #0006); }
.dock .badge { position: absolute; left: 6px; top: 0; width: 26px; height: 26px; }
.run::after, .focus::after { content: ""; position: absolute; bottom: 0; width: 5px; height: 5px; border-radius: 3px; background: #3060ee; }
.focus::after { width: 64px; border-radius: 3px 3px 0 0; }
.tooltip { position: absolute; left: 98px; top: 118px; width: 288px; height: 46px; display: flex; align-items: center; justify-content: center; border-radius: 5px; background: #0c0c0ce0; color: #fff; z-index: 2; }
.pointer { position: absolute; left: 424px; top: 51px; width: 26px; height: 42px; z-index: 2; }
```
